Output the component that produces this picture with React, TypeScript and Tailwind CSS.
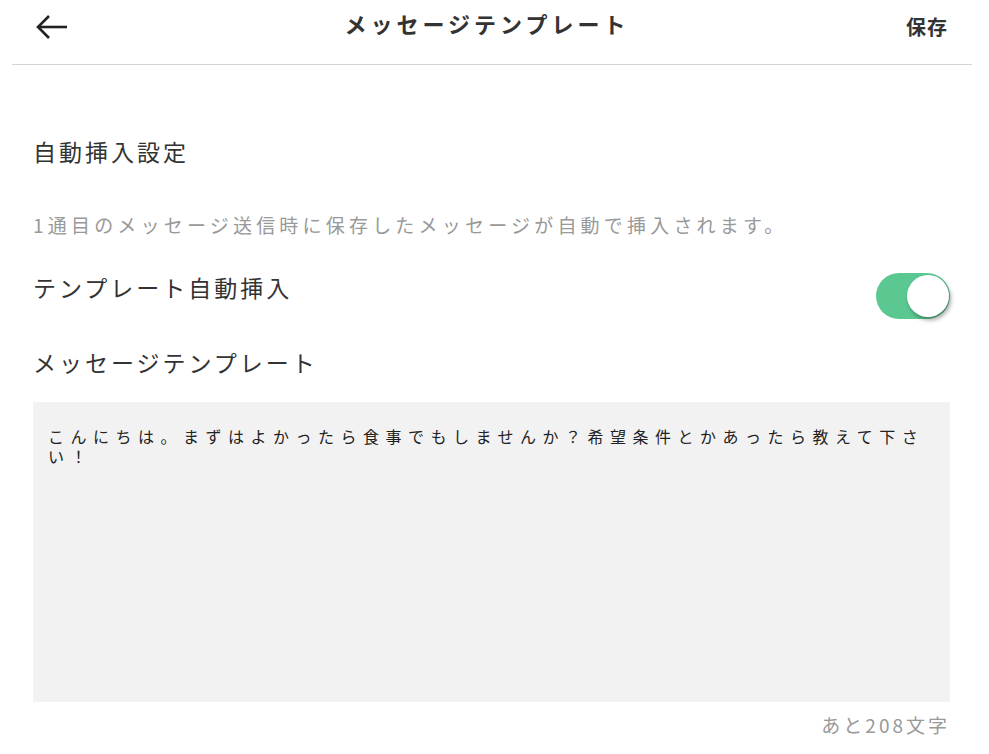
const jp = { fontFamily: '"Noto Sans CJK JP", "Noto Sans", sans-serif' };

function BackArrow() {
  return (
    <svg width="32" height="26" viewBox="0 0 32 26" fill="none" stroke="#222" strokeWidth="2.6">
      <path d="M31 13H3" />
      <path d="M13 2L2 13l11 11" />
    </svg>
  );
}

function Toggle({ on }: { on: boolean }) {
  return (
    <div className={`relative w-[74px] h-[46px] rounded-full ${on ? 'bg-[#5bc892]' : 'bg-[#ccc]'}`}>
      <div className="absolute right-[1px] top-[2px] w-[42px] h-[42px] rounded-full bg-white shadow-[2px_3px_4px_rgba(0,0,0,0.35)]" />
    </div>
  );
}

export default function App() {
  const message = 'こんにちは。まずはよかったら食事でもしませんか？希望条件とかあったら教えて下さい！';
  return (
    <div className="w-[989px] h-[754px] bg-white text-[#333]" style={jp}>
      <header className="ml-[12px] w-[960px] h-[65px] border-b border-[#d4d4d4] flex items-center justify-between pl-[24px] pr-[24px] pb-[10px]">
        <BackArrow />
        <h1 className="mb-[8px] text-[22px] font-bold tracking-[4px] text-[#333]">メッセージテンプレート</h1>
        <button className="text-[20px] font-bold tracking-[1px] text-[#333]">保存</button>
      </header>

      <main className="w-[950px] pl-[33px] pt-[69px]">
        <h2 className="text-[23px] tracking-[3px] leading-[34px]">自動挿入設定</h2>
        <p className="mt-[44px] text-[19px] tracking-[4.2px] text-[#999] leading-[26px] whitespace-nowrap">
          1通目のメッセージ送信時に保存したメッセージが自動で挿入されます。
        </p>

        <div className="mt-[35px] flex items-start justify-between">
          <span className="-mt-[3px] text-[23px] tracking-[3px] leading-[34px]">テンプレート自動挿入</span>
          <Toggle on />
        </div>

        <h2 className="mt-[26px] text-[23px] tracking-[3px] leading-[34px]">メッセージテンプレート</h2>

        <textarea
          className="mt-[23px] block w-full h-[300px] bg-[#f2f2f2] resize-none outline-none px-[15px] pt-[24px] text-[16px] leading-[20px] tracking-[6.5px] text-[#222]"
          style={jp}
          defaultValue={message}
        />
        <div className="mt-[10px] text-right text-[19px] tracking-[3px] text-[#999] leading-[26px]">あと208文字</div>
      </main>
    </div>
  );
}
